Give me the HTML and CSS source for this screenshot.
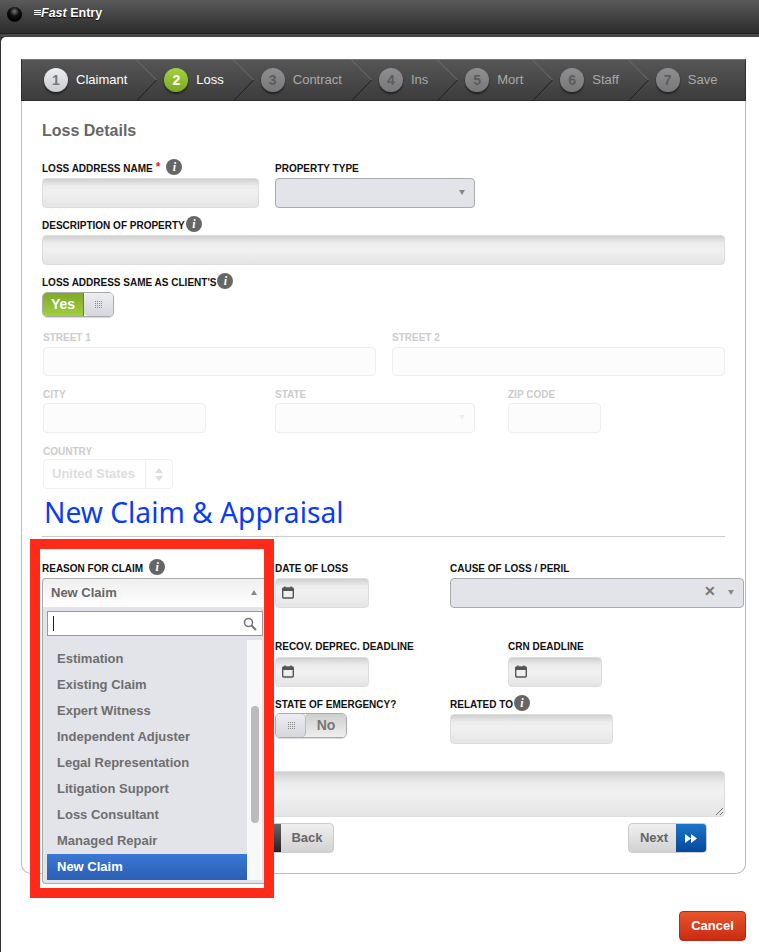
FILE: index.html
```html
<!DOCTYPE html>
<html lang="en">
<head>
    <meta charset="UTF-8">
    <meta name="viewport" content="width=device-width, initial-scale=1.0">
    <title>Fast Entry</title>
    <link rel="stylesheet" href="styles.css">
</head>
<body>
    <svg class="svg-defs" width="0" height="0">
        <symbol id="cal" viewBox="0 0 12 13">
            <path d="M3 0.5v2M9 0.5v2" stroke="#555" stroke-width="1.6" fill="none"/>
            <rect x="0.7" y="2" width="10.6" height="10" rx="1" fill="none" stroke="#555" stroke-width="1.4"/>
            <rect x="0.7" y="2" width="10.6" height="3" fill="#555"/>
        </symbol>
        <symbol id="chev" viewBox="0 0 21 41">
            <path d="M0.5 0L20.5 20" stroke="#6e6e6e" fill="none"/>
            <path d="M20.5 20L0.5 41" stroke="#1f1f1f" fill="none"/>
        </symbol>
    </svg>

    <div class="topbar">
        <span class="ball"></span>
        <span class="bars"></span>
        <span class="title"><em>Fast</em> Entry</span>
    </div>

    <div class="modal">
        <div class="panel">
            <div class="wizard">
                <div class="step done"><span class="num">1</span><span class="step-name">Claimant</span><svg class="chev"><use href="#chev"/></svg></div>
                <div class="step active"><span class="num">2</span><span class="step-name">Loss</span><svg class="chev"><use href="#chev"/></svg></div>
                <div class="step"><span class="num">3</span><span class="step-name">Contract</span><svg class="chev"><use href="#chev"/></svg></div>
                <div class="step"><span class="num">4</span><span class="step-name">Ins</span><svg class="chev"><use href="#chev"/></svg></div>
                <div class="step"><span class="num">5</span><span class="step-name">Mort</span><svg class="chev"><use href="#chev"/></svg></div>
                <div class="step"><span class="num">6</span><span class="step-name">Staff</span><svg class="chev"><use href="#chev"/></svg></div>
                <div class="step"><span class="num">7</span><span class="step-name">Save</span></div>
            </div>

            <div class="form">
                <h2 class="section-title">Loss Details</h2>

                <div class="row cols-233">
                    <div class="field">
                        <label>LOSS ADDRESS NAME<span class="req">*</span><i class="info wide">i</i></label>
                        <div class="input w-217"></div>
                    </div>
                    <div class="field">
                        <label>PROPERTY TYPE</label>
                        <div class="select w-200"><span class="arrow"></span></div>
                    </div>
                </div>

                <div class="field gap-7">
                    <label>DESCRIPTION OF PROPERTY<i class="info tight">i</i></label>
                    <div class="input"></div>
                </div>

                <div class="field gap-7">
                    <label>LOSS ADDRESS SAME AS CLIENT'S<i class="info tight">i</i></label>
                    <div class="toggle">
                        <span class="toggle-on">Yes</span>
                        <span class="knob"></span>
                    </div>
                </div>

                <div class="disabled">
                    <div class="row street gap-10">
                        <div class="field">
                            <label>STREET 1</label>
                            <div class="input short"></div>
                        </div>
                        <div class="field">
                            <label>STREET 2</label>
                            <div class="input short"></div>
                        </div>
                    </div>

                    <div class="row cols-233 gap-9 lh-18">
                        <div class="field nudge">
                            <label>CITY</label>
                            <div class="input w-163"></div>
                        </div>
                        <div class="field">
                            <label>STATE</label>
                            <div class="input w-200"><span class="arrow"></span></div>
                        </div>
                        <div class="field">
                            <label>ZIP CODE</label>
                            <div class="input w-93"></div>
                        </div>
                    </div>

                    <div class="field nudge gap-10 lh-16">
                        <label>COUNTRY</label>
                        <div class="country">
                            <span class="country-name">United States</span>
                            <span class="spin"><b class="up"></b><b class="down"></b></span>
                        </div>
                    </div>
                </div>

                <h1 class="big-title">New Claim &amp; Appraisal</h1>
                <hr class="rule">

                <div class="row cols-reason gap-21">
                    <div class="field reason">
                        <label>REASON FOR CLAIM<i class="info wide">i</i></label>
                        <div class="dd-head">New Claim<span class="arrow up-arrow"></span></div>
                        <div class="dropdown">
                            <div class="dd-search">
                                <span class="caret"></span>
                                <svg class="glass" width="14" height="14" viewBox="0 0 14 14">
                                    <circle cx="5.5" cy="5.5" r="4" fill="none" stroke="#777" stroke-width="1.6"/>
                                    <path d="M8.5 8.5L13 13" stroke="#777" stroke-width="2.2"/>
                                </svg>
                            </div>
                            <div class="dd-body">
                                <ul class="dd-list">
                                    <li>Estimation</li>
                                    <li>Existing Claim</li>
                                    <li>Expert Witness</li>
                                    <li>Independent Adjuster</li>
                                    <li>Legal Representation</li>
                                    <li>Litigation Support</li>
                                    <li>Loss Consultant</li>
                                    <li>Managed Repair</li>
                                    <li class="selected">New Claim</li>
                                </ul>
                                <div class="dd-scroll"><span class="thumb"></span></div>
                            </div>
                        </div>
                    </div>
                    <div class="field">
                        <label>DATE OF LOSS</label>
                        <div class="input w-94 date"><svg class="cal"><use href="#cal"/></svg></div>
                    </div>
                    <div class="field">
                        <label>CAUSE OF LOSS / PERIL</label>
                        <div class="select w-294"><span class="clear">&#10005;</span><span class="arrow"></span></div>
                    </div>
                </div>

                <div class="row cols-233 gap-28 lh-21">
                    <div class="field"></div>
                    <div class="field">
                        <label>RECOV. DEPREC. DEADLINE</label>
                        <div class="input w-94 date"><svg class="cal"><use href="#cal"/></svg></div>
                    </div>
                    <div class="field">
                        <label>CRN DEADLINE</label>
                        <div class="input w-94 date"><svg class="cal"><use href="#cal"/></svg></div>
                    </div>
                </div>

                <div class="row cols-reason gap-8 lh-18">
                    <div class="field"></div>
                    <div class="field">
                        <label>STATE OF EMERGENCY?</label>
                        <div class="toggle off">
                            <span class="knob left"></span>
                            <span class="toggle-off">No</span>
                        </div>
                    </div>
                    <div class="field">
                        <label>RELATED TO<i class="info tight">i</i></label>
                        <div class="input w-163 drop-1"></div>
                    </div>
                </div>

                <div class="textarea">
                    <svg class="grip" width="9" height="9" viewBox="0 0 9 9"><path d="M1 8L8 1M5 8L8 5" stroke="#777" fill="none"/></svg>
                </div>

                <div class="nav-row">
                    <div class="btn back"><span class="btn-icon dark"></span><span class="btn-text">Back</span></div>
                    <div class="btn next">
                        <span class="btn-text pad">Next</span>
                        <span class="btn-icon blue">
                            <svg width="12" height="9" viewBox="0 0 12 9"><path d="M0 0l6 4.5L0 9zM6 0l6 4.5L6 9z" fill="#fff"/></svg>
                        </span>
                    </div>
                </div>
            </div>
        </div>

        <div class="modal-foot">
            <div class="btn-cancel">Cancel</div>
        </div>
    </div>

    <!-- red marker drawn over the reason dropdown -->
    <div class="marker"></div>
</body>
</html>
```

FILE: styles.css
```css
* {
    box-sizing: border-box;
}

body {
    margin: 0;
    height: 952px;
    position: relative;
    overflow: hidden;
    background: #333;
    font-family: "Liberation Sans", Arial, sans-serif;
    color: #666;
}

.svg-defs {
    position: absolute;
}

/* top bar */
.topbar {
    height: 37px;
    display: flex;
    align-items: flex-start;
    background: linear-gradient(to bottom, #5a5a5a, #3a3a3a 60%, #2f2f2f 33px, #1f1f1f 33px, #1f1f1f 34px, #4a4a4a 34px, #444);
}

.ball {
    width: 15px;
    height: 15px;
    margin: 7px 0 0 7px;
    border-radius: 50%;
    background: radial-gradient(circle at 50% 30%, #777, #111 35%, #000 70%, #333);
}

.bars {
    width: 7px;
    height: 6px;
    margin: 10px 0 0 12px;
    background: repeating-linear-gradient(to bottom, #fff 0, #fff 1px, transparent 1px, transparent 2px);
}

.title {
    margin: 5px 0 0 0;
    color: #fff;
    font-size: 12.5px;
    font-weight: bold;
    line-height: 16px;
    text-shadow: 0 1px 1px #000;
}

/* modal */
.modal {
    margin-left: 1px;
    height: 915px;
    padding: 22px 13px 0 20px;
    background: #fff;
    border-radius: 5px 0 0 0;
}

.panel {
    height: 815px;
    border: 1px solid #bbb;
    border-top: none;
    border-radius: 0 0 10px 10px;
}

/* wizard steps */
.wizard {
    height: 42px;
    margin: 0 -1px;
    display: flex;
    background: linear-gradient(to bottom, #565656, #3c3c3c);
    border: 1px solid #2a2f33;
    border-top-color: #777;
}

.step {
    position: relative;
    display: flex;
    align-items: center;
    gap: 8px;
    padding: 0 29px 1px 8px;
    font-size: 13px;
    color: #a9a9a9;
}

.step:first-child {
    padding-left: 22px;
}

.step.done,
.step.active {
    color: #fff;
}

.num {
    width: 24px;
    height: 24px;
    border-radius: 50%;
    display: flex;
    align-items: center;
    justify-content: center;
    font-size: 14px;
    font-weight: bold;
    color: #5c5c5c;
    background: linear-gradient(to bottom, #8f8f92, #77777a);
    box-shadow: 0 2px 2px rgba(0, 0, 0, 0.5);
}

.done .num {
    color: #777;
    background: linear-gradient(to bottom, #eceef2, #c9cbd2);
}

.active .num {
    color: #fff;
    background: linear-gradient(to bottom, #a6d040, #79aa22);
}

.chev {
    position: absolute;
    right: -1px;
    top: 0;
    width: 21px;
    height: 41px;
}

/* form */
.form {
    padding: 0 20px;
}

.section-title {
    margin: 0;
    height: 57px;
    padding-top: 21px;
    font-size: 16px;
    line-height: 18px;
    font-weight: bold;
    color: #666;
}

.row {
    display: grid;
}

.cols-233 {
    grid-template-columns: 233px 233px 1fr;
}

.cols-reason {
    grid-template-columns: 233px 175px 1fr;
}

.street {
    grid-template-columns: 333px 333px;
    gap: 16px;
    padding-left: 1px;
}

.nudge {
    padding-left: 1px;
}

.gap-7 {
    margin-top: 7px;
}

.gap-8 {
    margin-top: 8px;
}

.gap-9 {
    margin-top: 9px;
}

.gap-10 {
    margin-top: 10px;
}

.gap-21 {
    margin-top: 21px;
}

.gap-28 {
    margin-top: 28px;
}

.field label {
    display: flex;
    align-items: center;
    height: 20px;
    white-space: pre;
    font-size: 10px;
    font-weight: bold;
    color: #111;
}

.lh-16 label {
    height: 16px;
}

.lh-18 label {
    height: 18px;
}

.lh-21 label {
    height: 21px;
}

.req {
    margin: -3px 0 0 3px;
    color: #e0261c;
    font-size: 12px;
}

.info {
    width: 16px;
    height: 16px;
    margin-top: -2px;
    border-radius: 50%;
    background: #666;
    color: #fff;
    font: italic bold 12px/16px "Liberation Serif", serif;
    text-align: center;
}

.info.tight {
    margin-left: 1px;
}

.info.wide {
    margin-left: 6px;
}

.input {
    height: 30px;
    position: relative;
    border: 1px solid #ddd;
    border-radius: 4px;
    background: linear-gradient(to bottom, #cfcfcf, #ececec 25%, #f1f1f1 50%, #e4e4e4);
}

.short {
    height: 29px;
}

.drop-1 {
    margin-top: 1px;
}

.w-217 { width: 217px; }
.w-200 { width: 200px; }
.w-163 { width: 163px; }
.w-93 { width: 93px; }
.w-94 { width: 94px; }
.w-294 { width: 294px; }

.select {
    height: 30px;
    position: relative;
    border: 1px solid #aaa;
    border-radius: 4px;
    background: #e3e4e9;
}

.arrow {
    position: absolute;
    right: 9px;
    top: 11px;
    border-left: 3.5px solid transparent;
    border-right: 3.5px solid transparent;
    border-top: 5px solid #888;
}

.clear {
    position: absolute;
    right: 27px;
    top: 4px;
    font-size: 14px;
    font-weight: bold;
    color: #777;
}

.cal {
    position: absolute;
    left: 6px;
    top: 7px;
    width: 12px;
    height: 13px;
}

/* toggles */
.toggle {
    width: 72px;
    height: 25px;
    display: flex;
    border: 1px solid #aaa;
    border-radius: 5px;
    overflow: hidden;
    font-size: 14px;
    font-weight: bold;
    box-shadow: 0 1px 1px rgba(0, 0, 0, 0.15);
}

.toggle-on {
    width: 41px;
    padding-left: 8px;
    line-height: 23px;
    color: #fff;
    background: linear-gradient(to bottom, #7fa92a, #a2cf3d);
    box-shadow: inset -1px 0 0 #5f8a1c;
}

.toggle-off {
    flex: 1;
    text-align: center;
    line-height: 23px;
    color: #777;
    background: linear-gradient(to bottom, #cfcfcf, #eee);
}

.knob {
    flex: 1;
    display: flex;
    align-items: center;
    justify-content: center;
    border-radius: 4px 0 0 4px;
    background: linear-gradient(to bottom, #eceef2, #d5d7dd);
}

.knob.left {
    flex: none;
    width: 30px;
    border-radius: 0 4px 4px 0;
    box-shadow: inset -1px 0 0 #bbb;
}

.knob::after {
    content: "";
    width: 7px;
    height: 7px;
    background: radial-gradient(circle at 0.5px 0.5px, #8a8a8a 0.7px, transparent 0.8px) 0 0 / 2px 2px;
}

/* disabled address block */
.disabled label {
    color: #ccc;
}

.disabled .input {
    border-color: #eee;
    background: #fcfcfc;
}

.disabled .arrow {
    border-top-color: #eee;
}

.country {
    width: 130px;
    height: 30px;
    display: flex;
    border: 1px solid #f0f0f0;
    border-radius: 4px;
}

.country-name {
    flex: 1;
    padding-left: 8px;
    line-height: 28px;
    font-size: 13px;
    font-weight: bold;
    color: #ddd;
    border-right: 1px solid #f0f0f0;
}

.spin {
    width: 26px;
    display: flex;
    flex-direction: column;
    align-items: center;
    justify-content: center;
    gap: 3px;
}

.spin b {
    border-left: 4px solid transparent;
    border-right: 4px solid transparent;
}

.spin .up {
    border-bottom: 5px solid #ddd;
}

.spin .down {
    border-top: 5px solid #ddd;
}

.big-title {
    margin: 0;
    height: 47px;
    padding: 2px 0 0 2px;
    font-family: "Noto Sans", sans-serif;
    font-size: 28.2px;
    line-height: 42px;
    font-weight: normal;
    color: #0a3cf5;
}

.rule {
    height: 1px;
    margin: 0;
    border: none;
    background: #ccc;
}

/* reason dropdown */
.reason {
    position: relative;
    z-index: 2;
}

.dd-head {
    width: 232px;
    height: 30px;
    padding-left: 8px;
    position: relative;
    line-height: 28px;
    font-size: 13px;
    font-weight: bold;
    color: #666;
    border: 1px solid #aaa;
    border-bottom: none;
    border-radius: 4px 4px 0 0;
    background: linear-gradient(to bottom, #f0f0f0, #fff);
}

.up-arrow {
    top: 11px;
    right: 16px;
    border-top: none;
    border-bottom: 5px solid #888;
}

.dropdown {
    position: absolute;
    left: 0;
    top: 49px;
    width: 232px;
    height: 277px;
    padding: 4px 0 0 4px;
    background: #e3e4e9;
    border: 1px solid #aaa;
    border-top: none;
    border-radius: 0 0 4px 4px;
}

.dd-search {
    width: 216px;
    height: 25px;
    display: flex;
    align-items: center;
    justify-content: space-between;
    padding: 0 5px 0 5px;
    background: #fff;
    border: 1px solid #999;
}

.caret {
    width: 1px;
    height: 15px;
    background: #222;
}

.dd-body {
    display: flex;
    margin-top: 4px;
}

.dd-list {
    width: 200px;
    margin: 0;
    padding: 6px 0 0;
    list-style: none;
}

.dd-list li {
    height: 26px;
    padding-left: 10px;
    line-height: 26px;
    font-size: 13px;
    font-weight: bold;
    color: #6e6e6e;
}

.dd-list .selected {
    color: #fff;
    background: linear-gradient(to bottom, #3a78d6, #2a5fb4);
}

.dd-scroll {
    width: 15px;
    height: 240px;
    background: #f8f8f9;
    padding: 66px 0 0 4px;
}

.thumb {
    display: block;
    width: 8px;
    height: 117px;
    border-radius: 4px;
    background: #bbb;
}

/* bottom of the form */
.textarea {
    height: 46px;
    margin-top: 27px;
    position: relative;
    border: 1px solid #ddd;
    border-radius: 4px;
    background: linear-gradient(to bottom, #cfcfcf, #ececec 25%, #f1f1f1 50%, #e4e4e4);
}

.grip {
    position: absolute;
    right: 0;
    bottom: 0;
}

.nav-row {
    display: flex;
    justify-content: space-between;
    margin-top: 6px;
    padding: 0 18px 0 208px;
}

.btn {
    height: 30px;
    display: flex;
    border: 1px solid #ccc;
    border-radius: 4px;
    overflow: hidden;
    font-size: 13px;
    font-weight: bold;
    color: #666;
    background: linear-gradient(to bottom, #f0f0f0, #d2d2d2);
}

.btn-text {
    flex: 1;
    line-height: 27px;
    text-align: center;
}

.btn-text.pad {
    padding-left: 3px;
}

.back {
    width: 84px;
}

.next {
    width: 79px;
}

.btn-icon {
    width: 30px;
    display: flex;
    align-items: center;
    justify-content: center;
}

.dark {
    background: linear-gradient(to bottom, #666, #222);
}

.blue {
    background: linear-gradient(to bottom, #1b76c8, #04499a);
}

.modal-foot {
    display: flex;
    justify-content: flex-end;
    margin-top: 37px;
}

.btn-cancel {
    width: 67px;
    height: 30px;
    line-height: 28px;
    text-align: center;
    font-size: 13px;
    font-weight: bold;
    color: #fff;
    border: 1px solid #b52a12;
    border-radius: 4px;
    background: linear-gradient(to bottom, #e8552a, #c92b12);
}

.marker {
    position: absolute;
    left: 30px;
    top: 539px;
    width: 244px;
    height: 359px;
    border: 10px solid #ff2a18;
    z-index: 3;
}
```
